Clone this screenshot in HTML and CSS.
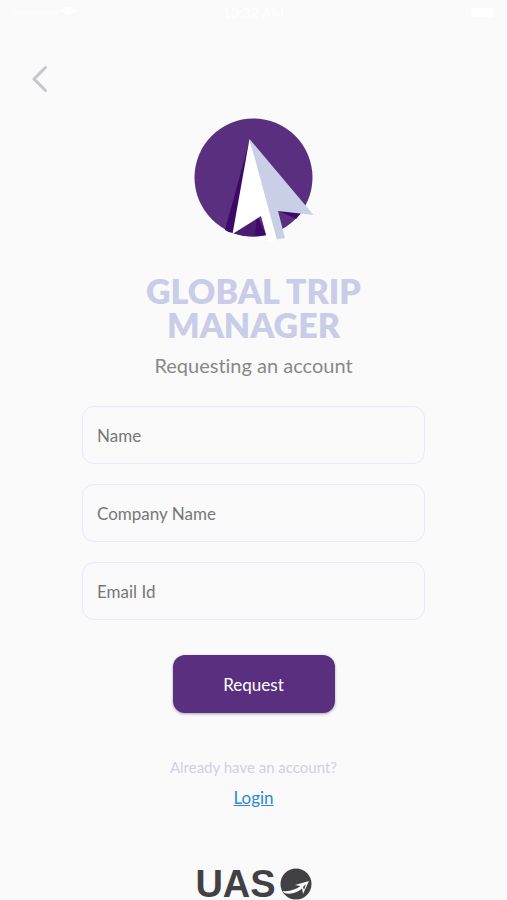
FILE: index.html
```html
<!DOCTYPE html>
<html lang="en">
<head>
<meta charset="utf-8">
<meta name="viewport" content="width=device-width, initial-scale=1">
<title>Global Trip Manager</title>
<link rel="stylesheet" href="styles.css">
</head>
<body>
<div class="status" aria-hidden="true">
  <svg width="66" height="16" viewBox="0 0 66 16"><path d="M0 11h46" stroke="#fcfcfc" stroke-width="5"/><path d="M48 9q8-9 16 0l-8 5z" fill="#fff"/></svg>
  <span class="clock">10:32 AM</span>
  <svg class="battery" width="26" height="16" viewBox="0 0 26 16"><rect x="2" y="6" width="22" height="9" rx="3" fill="#fff"/></svg>
</div>
<header class="topbar">
  <button class="back" type="button" aria-label="Back">
    <svg width="16" height="28" viewBox="0 0 16 28"><path d="M13.5 2.5 2 14 13.5 25.500" fill="none" stroke="#c5c6ca" stroke-width="3" stroke-linecap="round" stroke-linejoin="round"/></svg>
  </button>
</header>
<main class="content">
  <svg class="emblem" width="120" height="124" viewBox="0 0 120 124" aria-hidden="true">
    <circle cx="59.500" cy="59.500" r="59" fill="#5a2f7f"/>
    <path d="M56 21 31 112q4 3 8 3L58 60z" fill="#3d0867"/>
    <path d="M38 115 62 97 72 117Q55 121 38 115z" fill="#4a1d73"/>
    <path d="M63 97 61 118 72 117z" fill="#3d0867"/>
    <path d="M83 92 107 95 102 101z" fill="#3d0867"/>
    <path d="M55.500 21 119.500 97 84 93 91 120 80 122z" fill="#c8cfe7"/>
    <path d="M55.500 21 38.500 116 67 98 74 124 83 122z" fill="#fff"/>
  </svg>
  <h1 class="title">GLOBAL TRIP MANAGER</h1>
  <p class="subtitle">Requesting an account</p>
  <form class="form">
    <input class="field" type="text" placeholder="Name" aria-label="Name">
    <input class="field" type="text" placeholder="Company Name" aria-label="Company Name">
    <input class="field" type="email" placeholder="Email Id" aria-label="Email Id">
    <button class="submit" type="button">Request</button>
  </form>
  <p class="prompt">Already have an account?</p>
  <a class="login" href="#login">Login</a>
</main>
<footer class="brand">
  <span class="brand-name">UAS</span>
  <svg width="32" height="32" viewBox="0 0 32 32" aria-hidden="true">
    <circle cx="16" cy="16" r="15.500" fill="#414144"/>
    <path d="M3 23Q13 24 22 17L24 19Q14 28 4 25z" fill="#fafafb"/>
    <path d="M29 13 15 17 20 18 22 20 23 26z" fill="#fafafb"/>
    <path d="M26 16 23 19 24 22z" fill="#414144"/>
  </svg>
</footer>
</body>
</html>
```
FILE: styles.css
```css
* {
  box-sizing: border-box;
}

html {
  overflow-x: hidden;
  scrollbar-width: none;
}

body {
  margin: 0;
  background: #fafafb;
  color: #777;
  font-family: Lato, "Liberation Sans", sans-serif;
  font-variant-ligatures: none;
}

.status {
  display: grid;
  grid-template-columns: 1fr auto 1fr;
  height: 24px;
  padding: 2px 12px 0;
}

.battery {
  justify-self: end;
}

.clock {
  color: #fff;
  font-size: 14px;
  line-height: 22px;
}

.topbar {
  padding: 41px 32px 0;
}

.back {
  display: block;
  padding: 0;
  border: 0;
  background: none;
  cursor: pointer;
}

.back svg,
.emblem,
.brand svg {
  display: block;
}

.content {
  display: flex;
  flex-direction: column;
  align-items: center;
  padding: 25px 82px 0;
}

.title {
  max-width: 240px;
  margin: 32px 0 0;
  color: #c9cde7;
  font-size: 34px;
  font-weight: 800;
  line-height: 34px;
  text-align: center;
}

.subtitle {
  margin: 11px 0 0;
  color: #888;
  font-size: 20px;
  line-height: 24px;
}

.form {
  display: flex;
  flex-direction: column;
  align-items: center;
  gap: 20px;
  width: 100%;
  margin-top: 29px;
}

.field {
  width: 100%;
  height: 58px;
  padding: 0 14px;
  border: 1px solid #e9e9fa;
  border-radius: 12px;
  background: transparent;
  color: #555;
  font: 17px/24px Lato, "Liberation Sans", sans-serif;
}

.field::placeholder {
  color: #777;
  opacity: 1;
}

.submit {
  width: 162px;
  height: 58px;
  margin-top: 15px;
  padding: 2px 0 0;
  border: 0;
  border-radius: 12px;
  background: #5a2f7f;
  box-shadow: 0 1px 3px rgb(0 0 0 / 35%);
  color: #fff;
  font: 17px/24px Lato, "Liberation Sans", sans-serif;
  cursor: pointer;
}

.prompt {
  margin: 44px 0 0;
  color: #cfd1e5;
  font-size: 15px;
  line-height: 20px;
}

.login {
  margin-top: 9px;
  color: #2b88dc;
  font-size: 17px;
  line-height: 24px;
}

.brand {
  display: flex;
  align-items: center;
  justify-content: center;
  gap: 4px;
  margin-top: 58px;
}

.brand-name {
  color: #414144;
  font-family: "Liberation Sans", sans-serif;
  font-size: 38px;
  font-weight: 700;
  line-height: 32px;
}
```
